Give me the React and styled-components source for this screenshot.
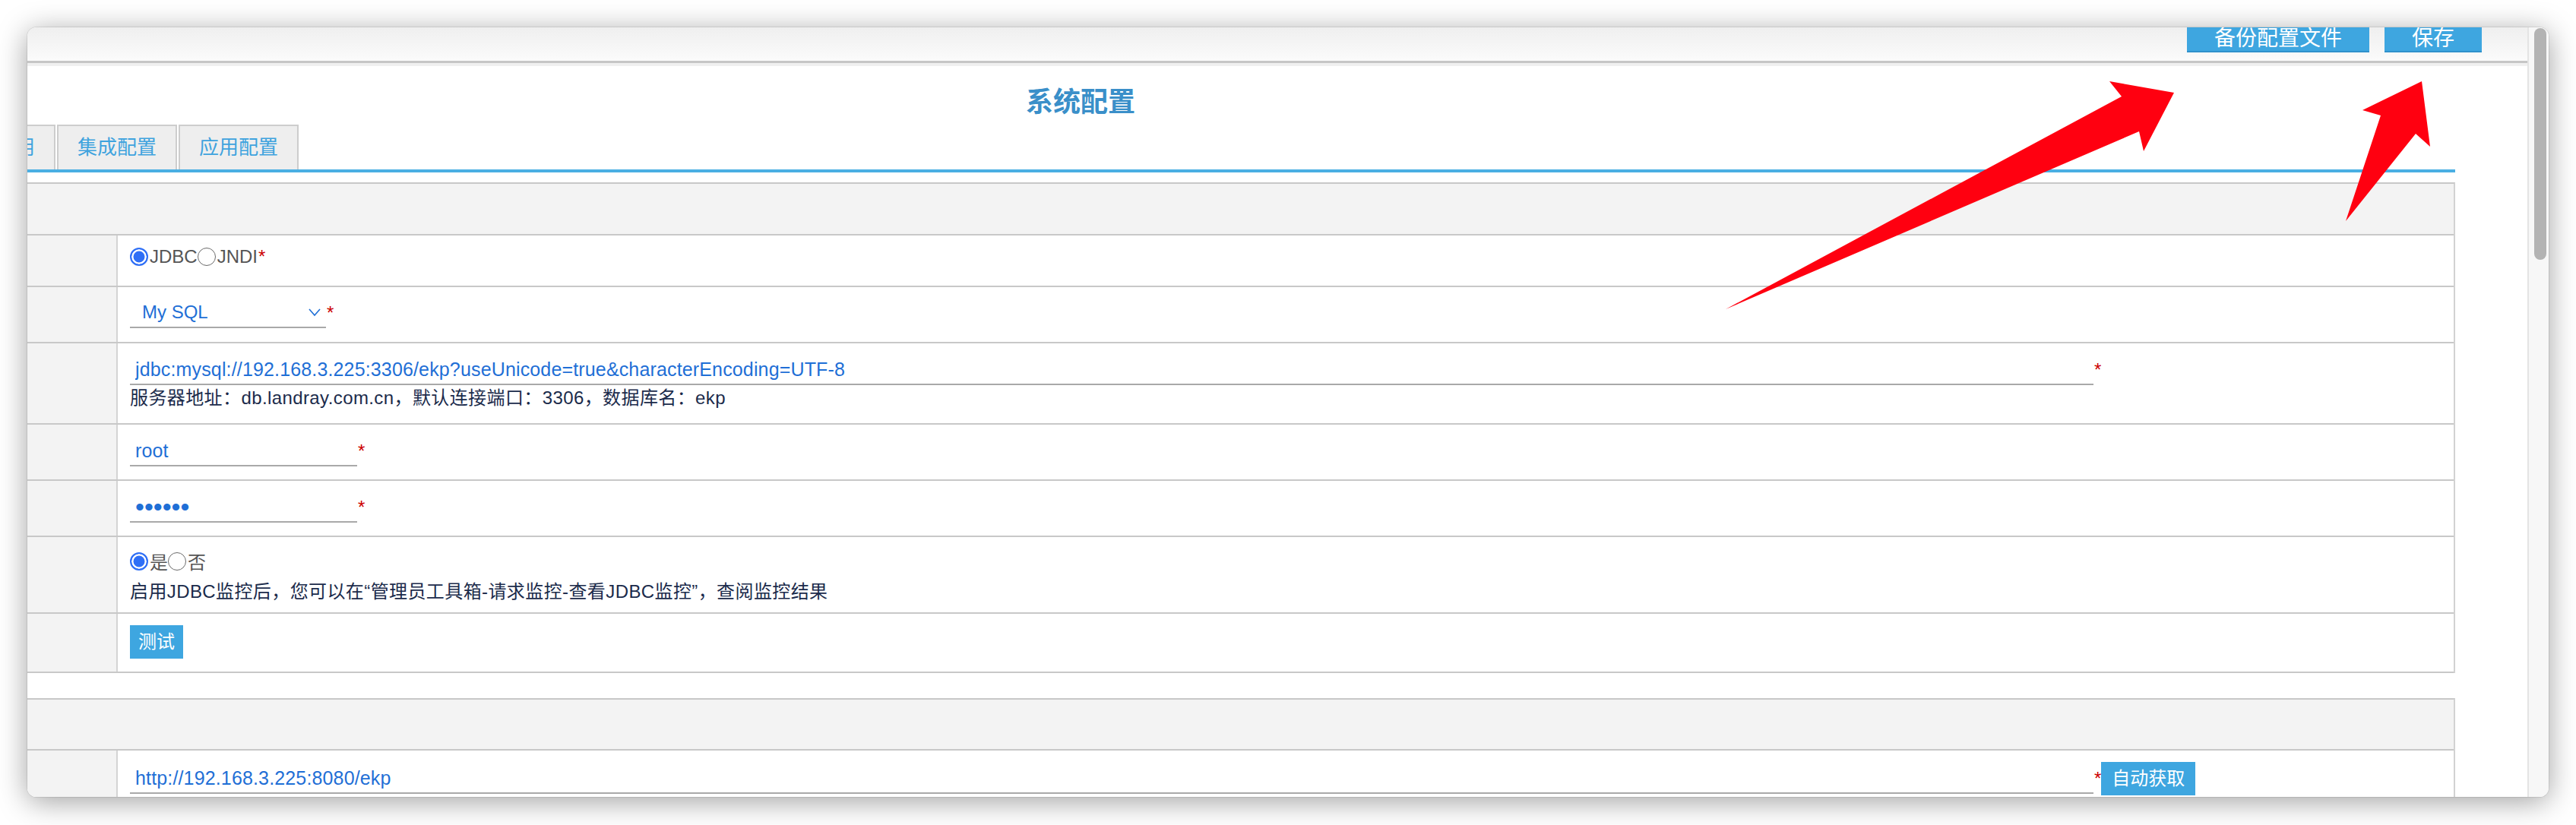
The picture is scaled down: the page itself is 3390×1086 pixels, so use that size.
import React from 'react';
import styled, { createGlobalStyle } from 'styled-components';

const GlobalStyle = createGlobalStyle`
  html, body {
    margin: 0;
    padding: 0;
    background: #fff;
  }
  body {
    width: 3390px;
    height: 1086px;
    overflow: hidden;
    font-family: "Liberation Sans", "Noto Sans CJK SC", sans-serif;
  }
`;

const tabs = ['功能启用', '集成配置', '应用配置'];

const Radio = ({ checked, label }) => (
  <RadioItem>
    <RadioDot $checked={checked} />
    <RadioText>{label}</RadioText>
  </RadioItem>
);

const Required = () => <Star>*</Star>;

const Chevron = () => (
  <svg width="18" height="12" viewBox="0 0 18 12">
    <path d="M2 2 L9 10 L16 2" fill="none" stroke="#1f6fd6" strokeWidth="1.6" />
  </svg>
);

const Arrows = () => (
  <ArrowLayer width="3390" height="1086" viewBox="0 0 3390 1086">
    <polygon
      fill="#ff0010"
      points="2271,407 2792,127 2776,107 2861,122 2821,199 2815,173"
    />
    <polygon
      fill="#ff0010"
      points="3187,107 3109,145 3133,152 3087,291 3179,176 3198,193"
    />
  </ArrowLayer>
);

const App = () => {
  return (
    <Screen>
      <GlobalStyle />
      <Window>
        <Main>
          <Toolbar>
            <TopButton>备份配置文件</TopButton>
            <TopButton>保存</TopButton>
          </Toolbar>
          <Viewport>
            <Page>
              <Title>系统配置</Title>
              <TabBar>
                {tabs.map((tab) => (
                  <Tab key={tab}>{tab}</Tab>
                ))}
              </TabBar>

              <Table $top={13}>
                <HeaderRow $h={66} />
                <Row $h={66}>
                  <LabelCell />
                  <ValueCell $pt={14}>
                    <Line>
                      <Radio checked label="JDBC" />
                      <Radio label="JNDI" />
                      <Required />
                    </Line>
                  </ValueCell>
                </Row>
                <Row $h={72}>
                  <LabelCell />
                  <ValueCell $pt={14}>
                    <Line>
                      <Select>
                        <span>My SQL</span>
                        <Chevron />
                      </Select>
                      <Required />
                    </Line>
                  </ValueCell>
                </Row>
                <Row $h={105}>
                  <LabelCell />
                  <ValueCell $pt={15}>
                    <Line>
                      <Field
                        $w={2584}
                        defaultValue="jdbc:mysql://192.168.3.225:3306/ekp?useUnicode=true&characterEncoding=UTF-8"
                      />
                      <Required />
                    </Line>
                    <Hint $top={2}>
                      服务器地址：db.landray.com.cn，默认连接端口：3306，数据库名：ekp
                    </Hint>
                  </ValueCell>
                </Row>
                <Row $h={72}>
                  <LabelCell />
                  <ValueCell $pt={15}>
                    <Line>
                      <Field $w={299} defaultValue="root" />
                      <Required />
                    </Line>
                  </ValueCell>
                </Row>
                <Row $h={72}>
                  <LabelCell />
                  <ValueCell $pt={15}>
                    <Line>
                      <Field $w={299} $secret type="password" defaultValue="123456" />
                      <Required />
                    </Line>
                  </ValueCell>
                </Row>
                <Row $h={99}>
                  <LabelCell />
                  <ValueCell $pt={14}>
                    <Line>
                      <Radio checked label="是" />
                      <Radio label="否" />
                    </Line>
                    <Hint $top={8}>
                      启用JDBC监控后，您可以在“管理员工具箱-请求监控-查看JDBC监控”，查阅监控结果
                    </Hint>
                  </ValueCell>
                </Row>
                <Row $h={76}>
                  <LabelCell />
                  <ValueCell $pt={15}>
                    <Line>
                      <SmallButton>测试</SmallButton>
                    </Line>
                  </ValueCell>
                </Row>
              </Table>

              <Table $top={33}>
                <HeaderRow $h={65} />
                <Row $h={74}>
                  <LabelCell />
                  <ValueCell $pt={15}>
                    <Line>
                      <Field $w={2584} defaultValue="http://192.168.3.225:8080/ekp" />
                      <Required />
                      <SmallButton $wide>自动获取</SmallButton>
                    </Line>
                  </ValueCell>
                </Row>
              </Table>
            </Page>
          </Viewport>
        </Main>
        <ScrollTrack>
          <Thumb />
        </ScrollTrack>
      </Window>
      <Arrows />
    </Screen>
  );
};

const Screen = styled.div`
  position: relative;
  width: 3390px;
  height: 1086px;
  padding: 36px 0 0 36px;
  box-sizing: border-box;
  background: #fff;
`;

const Window = styled.div`
  display: flex;
  width: 3318px;
  height: 1013px;
  border-radius: 12px;
  overflow: hidden;
  background: #fff;
  box-shadow: 0 0 0 1px rgba(0, 0, 0, 0.08), 0 6px 38px rgba(0, 0, 0, 0.38);
`;

const Main = styled.div`
  flex: 1;
  min-width: 0;
  display: flex;
  flex-direction: column;
`;

const Toolbar = styled.div`
  height: 47px;
  flex-shrink: 0;
  display: flex;
  justify-content: flex-end;
  align-items: flex-end;
  gap: 20px;
  padding: 0 60px 11px 0;
  box-sizing: border-box;
  border-bottom: 3px solid #c6c6c6;
  background: linear-gradient(#efefef, #fbfbfb);
`;

const TopButton = styled.button`
  flex-shrink: 0;
  height: 48px;
  box-sizing: border-box;
  padding: 13px 36px 0;
  border: none;
  border-bottom: 2px solid #2f91cc;
  background: #3ea6e0;
  color: #fff;
  font-family: "Liberation Sans", "Noto Sans CJK SC", sans-serif;
  font-size: 28px;
  line-height: 33px;
`;

const Viewport = styled.div`
  flex: 1;
  overflow: hidden;
  border-top: 4px solid #f0f0f0;
  background: #fff;
`;

const Page = styled.div`
  width: 3618px;
  margin-left: -423px;
  padding-top: 24px;
`;

const Title = styled.h1`
  margin: 0;
  height: 48px;
  line-height: 48px;
  text-align: center;
  font-size: 36px;
  font-weight: bold;
  color: #3a8fc9;
`;

const TabBar = styled.div`
  display: flex;
  align-items: flex-end;
  gap: 2px;
  margin-top: 5px;
  padding-left: 302px;
  border-bottom: 4px solid #4aafe3;
`;

const Tab = styled.div`
  height: 59px;
  box-sizing: border-box;
  padding: 0 25px;
  border: 2px solid #cdcdcd;
  border-bottom: none;
  background: #eeeeee;
  color: #3ea3de;
  font-size: 26px;
  line-height: 57px;
`;

const Table = styled.div`
  margin-top: ${(p) => p.$top}px;
  border-top: 2px solid #c8c8c8;
  border-right: 2px solid #d2d2d2;
`;

const HeaderRow = styled.div`
  height: ${(p) => p.$h}px;
  background: #f3f3f3;
  border-bottom: 2px solid #c8c8c8;
`;

const Row = styled.div`
  display: grid;
  grid-template-columns: 542px 1fr;
  height: ${(p) => p.$h}px;
  border-bottom: 2px solid #c8c8c8;
`;

const LabelCell = styled.div`
  background: #f3f3f3;
  border-right: 2px solid #d4d4d4;
`;

const ValueCell = styled.div`
  display: flex;
  flex-direction: column;
  align-items: flex-start;
  padding: ${(p) => p.$pt}px 0 0 16px;
`;

const Line = styled.div`
  display: flex;
  align-items: center;
  min-height: 28px;
`;

const RadioItem = styled.span`
  display: inline-flex;
  align-items: center;
`;

const RadioDot = styled.span`
  width: 24px;
  height: 24px;
  box-sizing: border-box;
  border-radius: 50%;
  margin-right: 2px;
  border: ${(p) => (p.$checked ? '2.5px solid #2f6ff6' : '1.5px solid #6a6a6a')};
  background: ${(p) => (p.$checked ? '#2f6ff6' : '#fff')};
  box-shadow: ${(p) => (p.$checked ? 'inset 0 0 0 2.5px #fff' : 'none')};
`;

const RadioText = styled.span`
  font-size: 24px;
  color: #555;
`;

const Star = styled.span`
  margin-left: 1px;
  color: #cc0000;
  font-size: 24px;
  line-height: 28px;
`;

const Select = styled.div`
  display: flex;
  align-items: center;
  justify-content: space-between;
  width: 258px;
  height: 40px;
  box-sizing: border-box;
  padding: 0 6px 0 16px;
  border-bottom: 2px solid #a9a9a9;
  color: #1f6fd6;
  font-size: 24px;
`;

const Field = styled.input`
  width: ${(p) => p.$w}px;
  height: 40px;
  box-sizing: border-box;
  padding: 0 7px;
  border: none;
  border-bottom: 2px solid #a9a9a9;
  outline: none;
  background: transparent;
  color: #1f6fd6;
  font-family: "Liberation Sans", "Noto Sans CJK SC", sans-serif;
  font-size: ${(p) => (p.$secret ? 34 : 25)}px;
  letter-spacing: ${(p) => (p.$secret ? '0' : '0.15px')};
`;

const Hint = styled.div`
  margin-top: ${(p) => p.$top}px;
  line-height: 30px;
  font-size: 24px;
  letter-spacing: 0.4px;
  color: #1b2b4b;
  white-space: nowrap;
`;

const SmallButton = styled.button`
  height: 44px;
  padding: 0 ${(p) => (p.$wide ? 14 : 11)}px;
  border: none;
  background: #3ea6e0;
  color: #fff;
  font-family: "Liberation Sans", "Noto Sans CJK SC", sans-serif;
  font-size: 24px;
  line-height: 44px;
`;

const ScrollTrack = styled.div`
  width: 28px;
  flex-shrink: 0;
  box-sizing: border-box;
  border-left: 2px solid #e4e4e4;
  background: #f7f7f7;
`;

const Thumb = styled.div`
  width: 16px;
  height: 305px;
  margin: 1px 0 0 7px;
  border-radius: 8px;
  background: #b3b3b3;
`;

const ArrowLayer = styled.svg`
  position: absolute;
  top: 0;
  left: 0;
  pointer-events: none;
`;

export default App;
